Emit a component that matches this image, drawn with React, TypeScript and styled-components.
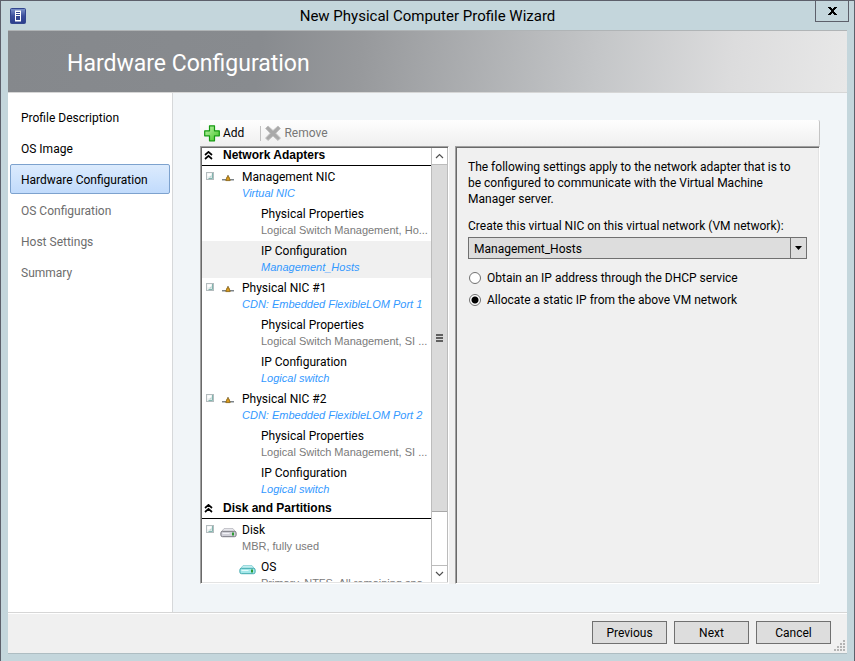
import React from "react";
import styled, { createGlobalStyle } from "styled-components";

const UI = `Roboto, "Open Sans", sans-serif`;
const SMALL = `"Liberation Sans", Arial, sans-serif`;

const GlobalStyle = createGlobalStyle`
  *, *::before, *::after { box-sizing: border-box; }
  body { margin: 0; background: #c4d6dc; color: #000; font: 12px/16px ${UI}; }
  button, select, input { font: inherit; color: inherit; margin: 0; }
  svg { display: block; flex: none; }
  ul { list-style: none; margin: 0; padding: 0; }
`;

const Window = styled.div`
  min-height: 100vh;
  display: flex;
  flex-direction: column;
  padding: 0 5px 7px;
  border: 1px solid #5d606b;
  background: #c4d6dc;
`;

const TitleBar = styled.header`
  height: 29px;
  display: grid;
  grid-template-columns: 30px 1fr 34px;
  align-items: center;
  padding: 0 0 0 4px;
`;

const WindowTitle = styled.h1`
  margin: 0;
  font-size: 15px;
  line-height: 20px;
  font-weight: 400;
  text-align: center;
`;

const CloseButton = styled.button`
  align-self: start;
  display: grid;
  place-items: center;
  width: 34px;
  height: 21px;
  padding: 0;
  border: 1px solid #5d606b;
  border-top: 0;
  background: transparent;
`;

const Client = styled.div`
  flex: 1;
  display: flex;
  flex-direction: column;
  margin: 0 2px;
  border-top: 1px solid #b0b4b6;
  border-bottom: 1px solid #aebdc2;
  background: #f0f0f0;
`;

const Banner = styled.div`
  height: 62px;
  display: flex;
  align-items: center;
  padding: 4px 59px 0;
  border-bottom: 1px solid #d6d6d6;
  background: linear-gradient(97deg, #85888c 0%, #888b8f 30%, #97999c 42%, #c4c6c8 70%, #dcdcdd 86%, #e8e8e8 100%);
`;

const PageTitle = styled.h2`
  margin: 0;
  color: #fff;
  font-size: 23px;
  line-height: 30px;
  font-weight: 400;
`;

const Body = styled.div`
  flex: 1;
  display: grid;
  grid-template-columns: 165px 1fr;
  background: #f1f5f8;
`;

const Steps = styled.nav`
  padding: 9px 2px;
  border-right: 1px solid #d6d8da;
  background: #fff;
`;

const StepList = styled.ul`
  display: grid;
  gap: 1px;
`;

const Step = styled.button<{ $current?: boolean }>`
  width: 100%;
  height: 30px;
  padding: 1px 10px 0;
  text-align: left;
  border: 1px solid ${(p) => (p.$current ? "#7da2ce" : "transparent")};
  border-radius: 2px;
  background: ${(p) => (p.$current ? "linear-gradient(#dcebfd, #c1dbfc)" : "transparent")};
  &:disabled { color: #6d6d6d; }
`;

const Main = styled.main`
  display: flex;
  flex-direction: column;
  padding: 27px 27px 28px;
  min-width: 0;
`;

const Toolbar = styled.div`
  height: 26px;
  display: flex;
  align-items: center;
  padding: 0 4px;
  border-right: 1px solid #c4c4c4;
  border-radius: 2px;
  background: linear-gradient(#fefefe, #efefef);
`;

const ToolButton = styled.button`
  display: flex;
  align-items: center;
  gap: 3px;
  padding: 0;
  border: 0;
  background: transparent;
  &:disabled { color: #777; }
`;

const ToolSeparator = styled.span`
  width: 1px;
  height: 15px;
  margin: 0 4px 0 16px;
  background: #c0c0c0;
`;

const Panels = styled.div`
  flex: 1;
  display: grid;
  grid-template-columns: 249px 1fr;
  gap: 6px;
  background: #f0f0f0;
`;

const Sunken = styled.section`
  border: 1px solid;
  border-color: #a0a0a0 #fff #fff #a0a0a0;
  box-shadow: inset 1px 1px 0 #696969, inset -1px -1px 0 #e3e3e3;
`;

const TreePane = styled(Sunken)`
  display: flex;
  height: 438px;
  padding: 1px 0 1px 1px;
  background: #fff;
`;

const Tree = styled.div`
  flex: 1;
  min-width: 0;
  overflow: hidden;
`;

const Group = styled.section`
  margin-bottom: 1px;
`;

const GroupHeader = styled.h3`
  display: flex;
  align-items: center;
  gap: 10px;
  height: 18px;
  margin: 0 0 1px;
  padding: 0 0 2px 2px;
  border-bottom: 1px solid #000;
  font: 700 12px/15px ${SMALL};
`;

const Row = styled.li<{ $selected?: boolean; $level: number }>`
  height: 37px;
  display: grid;
  grid-template-columns: ${(p) => (p.$level ? "34px 25px 1fr" : "15px 25px 1fr")};
  padding-top: 2px;
  background: ${(p) => (p.$selected ? "#f0f0f0" : "transparent")};
`;

const ToggleButton = styled.button`
  display: flex;
  width: 15px;
  height: 15px;
  padding: 3px 0 0 4px;
  border: 0;
  background: transparent;
`;

const IconCell = styled.span`
  padding: 5px 0 0 3px;
`;

const RowText = styled.span`
  white-space: nowrap;
`;

const RowTitle = styled.span`
  display: block;
`;

const RowNote = styled.span<{ $link?: boolean }>`
  display: block;
  font-family: ${SMALL};
  font-size: 11px;
  font-style: ${(p) => (p.$link ? "italic" : "normal")};
  color: ${(p) => (p.$link ? "#3399ff" : "#7a7a7a")};
`;

const ScrollBar = styled.div`
  width: 17px;
  display: flex;
  flex-direction: column;
  background: #fff;
  border: 1px solid #bcbcbc;
  border-width: 0 1px;
`;

const ScrollButton = styled.button`
  height: 17px;
  display: grid;
  place-items: center;
  padding: 0;
  border: 1px solid #bcbcbc;
  border-width: 0 0 1px;
  background: #fff;
  &:last-child { border-width: 1px 0 0; margin-top: auto; }
`;

const ScrollThumb = styled.div`
  flex: 0 0 347px;
  display: grid;
  place-items: center;
  border-bottom: 1px solid #a8a8a8;
  background: #dadada;
`;

const Settings = styled(Sunken)`
  padding: 12px;
  background: #f0f0f0;
`;

const Intro = styled.p`
  margin: 0 0 11px;
  padding-right: 12px;
`;

const FieldLabel = styled.label`
  display: block;
  margin-bottom: 3px;
`;

const SelectBox = styled.div`
  position: relative;
  height: 22px;
  margin-bottom: 11px;
`;

const Select = styled.select`
  appearance: none;
  width: 100%;
  height: 22px;
  padding: 2px 20px 0 5px;
  border: 1px solid #707070;
  border-radius: 0;
  background: #dddddd;
`;

const SelectArrow = styled.span`
  position: absolute;
  top: 0;
  right: 0;
  width: 17px;
  height: 22px;
  display: grid;
  place-items: center;
  border: 1px solid #707070;
  pointer-events: none;
`;

const Choice = styled.label`
  display: flex;
  align-items: center;
  gap: 6px;
  height: 16px;
  margin-bottom: 6px;
`;

const Radio = styled.input`
  appearance: none;
  width: 12px;
  height: 12px;
  margin-left: 1px;
  border: 1px solid #707070;
  border-radius: 50%;
  background: #fff;
  &:checked { background: radial-gradient(circle, #000 3px, #fff 4px); }
`;

const Footer = styled.footer`
  position: relative;
  height: 41px;
  display: flex;
  justify-content: flex-end;
  gap: 7px;
  padding: 8px 16px 0;
  border-top: 1px solid #d6d6d6;
  box-shadow: inset 0 1px 0 #fff;
`;

const PushButton = styled.button`
  width: 75px;
  height: 23px;
  padding: 0;
  border: 1px solid #707070;
  background: #dddddd;
`;

const SizeGrip = styled.svg`
  position: absolute;
  right: 2px;
  bottom: 2px;
`;

const AppIcon = () => (
  <svg width="16" height="16" viewBox="0 0 16 16" aria-hidden="true">
    <defs>
      <linearGradient id="app" x1="0" y1="0" x2="0" y2="1">
        <stop offset="0" stopColor="#7f95cc" />
        <stop offset="0.5" stopColor="#3b4f9c" />
        <stop offset="1" stopColor="#2a3c8c" />
      </linearGradient>
    </defs>
    <rect x="0.5" y="0.5" width="15" height="15" rx="1" fill="url(#app)" stroke="#33468f" />
    <path d="M5 2.5h6v11H5z" fill="#fff" />
    <path d="M6 4h4v1H6zM6 6h4v1H6zM6 8h4v4H6z" fill="#33468f" />
  </svg>
);

const CloseIcon = () => (
  <svg width="9" height="8" viewBox="0 0 9 8" shapeRendering="crispEdges" aria-hidden="true">
    <path d="M0 0h3v1H0zM6 0h3v1H6zM1 1h3v1H1zM5 1h3v1H5zM2 2h5v1H2zM3 3h3v2H3zM2 5h5v1H2zM1 6h3v1H1zM5 6h3v1H5zM0 7h3v1H0zM6 7h3v1H6z" />
  </svg>
);

const AddIcon = () => (
  <svg width="16" height="17" viewBox="0 0 16 17" aria-hidden="true">
    <defs>
      <linearGradient id="add" x1="0" y1="0" x2="1" y2="1">
        <stop offset="0" stopColor="#c4f4b0" />
        <stop offset="1" stopColor="#3fc522" />
      </linearGradient>
    </defs>
    <path d="M5.5 0.8h5v5h4.8v5h-4.8v5h-5v-5H0.7v-5h4.8z" fill="url(#add)" stroke="#149a10" strokeWidth="1.2" strokeLinejoin="round" />
  </svg>
);

const RemoveIcon = () => (
  <svg width="16" height="17" viewBox="0 0 16 17" aria-hidden="true">
    <path d="M3 1 8 5.6 13 1l2.4 2.4L10.8 8.3l4.6 4.8-2.4 2.4L8 11l-5 4.5-2.4-2.4 4.6-4.8L0.6 3.4z" fill="#a9a9a9" stroke="#c2c2c2" />
  </svg>
);

const CollapseIcon = () => (
  <svg width="9" height="9" viewBox="0 0 9 9" aria-hidden="true">
    <path d="M1 4 4.5 0.9 8 4M1 8 4.5 4.9 8 8" fill="none" stroke="#000" strokeWidth="1.7" />
  </svg>
);

const ToggleIcon = () => (
  <svg width="8" height="8" viewBox="0 0 8 8" aria-hidden="true">
    <rect x="0.5" y="0.5" width="7" height="7" fill="#eef1f1" stroke="#b4bcbe" />
    <path d="M1.5 1.5h3.5v2l-3.5 1z" fill="#fff" />
    <path d="M6.5 1v5.5H2.5" fill="none" stroke="#82b5af" />
    <path d="M5.5 3v2.5H3z" fill="#b8d3d0" />
  </svg>
);

const NicIcon = () => (
  <svg width="15" height="9" viewBox="0 0 15 9" aria-hidden="true">
    <path d="M2 5.5h12" stroke="#7c8388" />
    <path d="M2 6.5h12" stroke="#c0c4c7" />
    <path d="M8 1v2" stroke="#8a7a55" strokeWidth="1.4" />
    <path d="M7 2.8h2L10.2 6.6H5.8z" fill="#d99a1c" stroke="#8a6414" strokeWidth="0.8" />
  </svg>
);

const DiskIcon = ({ teal = false }: { teal?: boolean }) => (
  <svg width="17" height="11" viewBox="0 0 17 11" aria-hidden="true">
    <path d="M4 1.6h9L15.6 5H1.2z" fill={teal ? "#c8f1f3" : "#ececf0"} stroke={teal ? "#7fcdd0" : "#b4b4ba"} strokeWidth="0.8" />
    <rect x="0.9" y="4.3" width="15.2" height="5.4" rx="1.6" fill={teal ? "#a4e8ea" : "#d0d0d8"} stroke={teal ? "#3fa9ad" : "#77777f"} />
    <path d="M2.5 6.5h7" stroke={teal ? "#e2fbfb" : "#f2f2f6"} />
    <path d="M12 5.4h2v3h-2z" fill="#2c9a32" />
  </svg>
);

const Chevron = ({ down = false }: { down?: boolean }) => (
  <svg width="9" height="6" viewBox="0 0 9 6" aria-hidden="true">
    <path d={down ? "M1 1l3.5 3.5L8 1" : "M1 5l3.5-3.5L8 5"} fill="none" stroke="#505050" strokeWidth="1.2" />
  </svg>
);

type Item = {
  title: string;
  note: string;
  level?: number;
  link?: boolean;
  selected?: boolean;
  icon?: React.ReactNode;
};

const adapters: Item[] = [
  { title: "Management NIC", note: "Virtual NIC", link: true, icon: <NicIcon /> },
  { title: "Physical Properties", note: "Logical Switch Management, Ho...", level: 1 },
  { title: "IP Configuration", note: "Management_Hosts", level: 1, link: true, selected: true },
  { title: "Physical NIC #1", note: "CDN: Embedded FlexibleLOM Port 1", link: true, icon: <NicIcon /> },
  { title: "Physical Properties", note: "Logical Switch Management, SI ...", level: 1 },
  { title: "IP Configuration", note: "Logical switch", level: 1, link: true },
  { title: "Physical NIC #2", note: "CDN: Embedded FlexibleLOM Port 2", link: true, icon: <NicIcon /> },
  { title: "Physical Properties", note: "Logical Switch Management, SI ...", level: 1 },
  { title: "IP Configuration", note: "Logical switch", level: 1, link: true },
];

const disks: Item[] = [
  { title: "Disk", note: "MBR, fully used", icon: <DiskIcon /> },
  { title: "OS", note: "Primary, NTFS, All remaining spa...", level: 1, icon: <DiskIcon teal /> },
];

const steps = [
  { label: "Profile Description" },
  { label: "OS Image" },
  { label: "Hardware Configuration", current: true },
  { label: "OS Configuration", disabled: true },
  { label: "Host Settings", disabled: true },
  { label: "Summary", disabled: true },
];

const TreeGroup = ({ title, items }: { title: string; items: Item[] }) => (
  <Group>
    <GroupHeader>
      <CollapseIcon />
      {title}
    </GroupHeader>
    <ul>
      {items.map((item, i) => (
        <Row key={i} $level={item.level ?? 0} $selected={item.selected}>
          {item.level ? (
            <span />
          ) : (
            <ToggleButton aria-label={`Collapse ${item.title}`}>
              <ToggleIcon />
            </ToggleButton>
          )}
          <IconCell>{item.icon}</IconCell>
          <RowText>
            <RowTitle>{item.title}</RowTitle>
            <RowNote $link={item.link}>{item.note}</RowNote>
          </RowText>
        </Row>
      ))}
    </ul>
  </Group>
);

export default function App() {
  return (
    <Window>
      <GlobalStyle />
      <TitleBar>
        <AppIcon />
        <WindowTitle>New Physical Computer Profile Wizard</WindowTitle>
        <CloseButton aria-label="Close">
          <CloseIcon />
        </CloseButton>
      </TitleBar>
      <Client>
        <Banner>
          <PageTitle>Hardware Configuration</PageTitle>
        </Banner>
        <Body>
          <Steps>
            <StepList>
              {steps.map((s) => (
                <li key={s.label}>
                  <Step $current={s.current} disabled={s.disabled}>
                    {s.label}
                  </Step>
                </li>
              ))}
            </StepList>
          </Steps>
          <Main>
            <Toolbar>
              <ToolButton>
                <AddIcon />
                Add
              </ToolButton>
              <ToolSeparator />
              <ToolButton disabled>
                <RemoveIcon />
                Remove
              </ToolButton>
            </Toolbar>
            <Panels>
              <TreePane>
                <Tree>
                  <TreeGroup title="Network Adapters" items={adapters} />
                  <TreeGroup title="Disk and Partitions" items={disks} />
                </Tree>
                <ScrollBar>
                  <ScrollButton aria-label="Scroll up">
                    <Chevron />
                  </ScrollButton>
                  <ScrollThumb>
                    <svg width="7" height="8" viewBox="0 0 7 8" shapeRendering="crispEdges" aria-hidden="true">
                      <path d="M0 0h7v2H0zM0 3h7v2H0zM0 6h7v2H0z" fill="#606060" />
                    </svg>
                  </ScrollThumb>
                  <ScrollButton aria-label="Scroll down">
                    <Chevron down />
                  </ScrollButton>
                </ScrollBar>
              </TreePane>
              <Settings>
                <Intro>
                  The following settings apply to the network adapter that is to be configured to communicate with the
                  Virtual Machine Manager server.
                </Intro>
                <FieldLabel htmlFor="vm-network">Create this virtual NIC on this virtual network (VM network):</FieldLabel>
                <SelectBox>
                  <Select id="vm-network" defaultValue="Management_Hosts">
                    <option>Management_Hosts</option>
                  </Select>
                  <SelectArrow>
                    <svg width="7" height="4" viewBox="0 0 7 4" aria-hidden="true">
                      <path d="M0 0h7L3.5 4z" />
                    </svg>
                  </SelectArrow>
                </SelectBox>
                <Choice>
                  <Radio type="radio" name="ip" />
                  Obtain an IP address through the DHCP service
                </Choice>
                <Choice>
                  <Radio type="radio" name="ip" defaultChecked />
                  Allocate a static IP from the above VM network
                </Choice>
              </Settings>
            </Panels>
          </Main>
        </Body>
        <Footer>
          <PushButton>Previous</PushButton>
          <PushButton>Next</PushButton>
          <PushButton>Cancel</PushButton>
          <SizeGrip width="11" height="11" viewBox="0 0 11 11" shapeRendering="crispEdges" aria-hidden="true">
            <path d="M9 0h2v2H9zM6 3h2v2H6zM9 3h2v2H9zM3 6h2v2H3zM6 6h2v2H6zM9 6h2v2H9zM0 9h2v2H0zM3 9h2v2H3zM6 9h2v2H6zM9 9h2v2H9z" fill="#b4b4b4" />
          </SizeGrip>
        </Footer>
      </Client>
    </Window>
  );
}
